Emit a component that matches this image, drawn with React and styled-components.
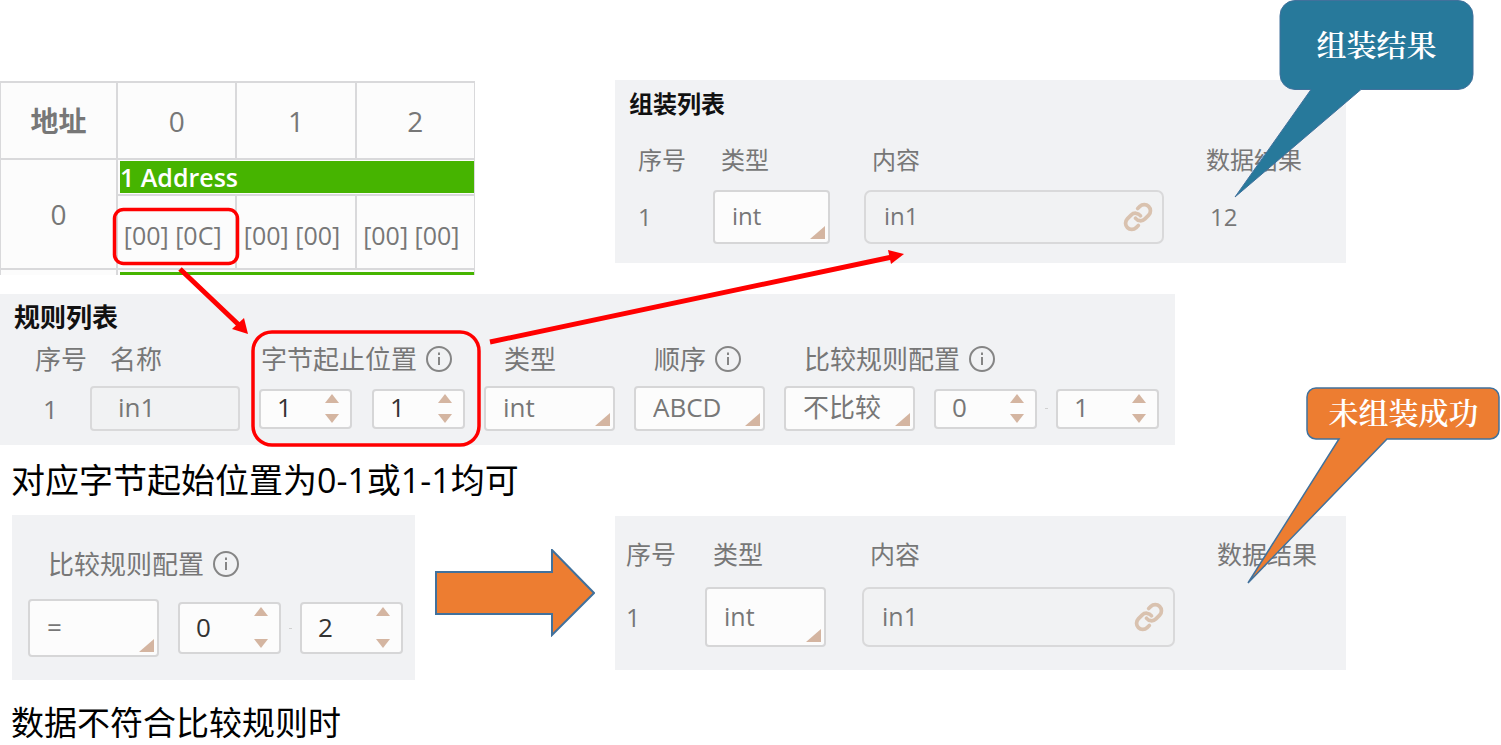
import React from 'react';
import styled, { createGlobalStyle } from 'styled-components';
import { Link } from 'lucide-react';

const App = () => {
  return (
    <>
      <GlobalStyle />
      <StPage>
        <StTopRow>
          <AddressTable />
          <StPanel $top={8} $bottom={19}>
            <StTitle>组装列表</StTitle>
            <AssemblyTable
              id="done"
              columns="98fr 151fr 342fr 140fr"
              indent={23}
              end={34}
              size={24}
              height={54}
              gap={14}
              top={24}
              result="12"
            />
          </StPanel>
        </StTopRow>

        <RulePanel />

        <StCaption $size={34}>对应字节起始位置为0-1或1-1均可</StCaption>

        <StBottomRow>
          <ComparePanel />
          <StBlockArrow viewBox="0 0 160 88" aria-hidden="true">
            <path d="M1 23H117V1L159 44L117 86V65H1Z" />
          </StBlockArrow>
          <StFailedPanel $top={22} $bottom={23}>
            <AssemblyTable
              id="failed"
              columns="90fr 157fr 355fr 129fr"
              indent={11}
              end={36}
              size={25}
              height={60}
              gap={17}
              top={0}
              result=""
            />
          </StFailedPanel>
        </StBottomRow>

        <StCaption $size={33}>数据不符合比较规则时</StCaption>

        <Annotations />
      </StPage>
    </>
  );
};

const AddressTable = () => {
  const values = ['[00] [0C]', '[00] [00]', '[00] [00]'];

  return (
    <StAddressTable>
      <colgroup>
        <StFirstCol />
        <col />
        <col />
        <col />
      </colgroup>
      <thead>
        <tr>
          <StHeadCell $bold>地址</StHeadCell>
          <StHeadCell>0</StHeadCell>
          <StHeadCell>1</StHeadCell>
          <StHeadCell>2</StHeadCell>
        </tr>
      </thead>
      <tbody>
        <tr>
          <StAddressCell rowSpan={2}>0</StAddressCell>
          <StBarCell colSpan={3}>
            <StBar>1 Address</StBar>
          </StBarCell>
        </tr>
        <tr>
          {values.map((value, index) => (
            <StValueCell key={index}>{value}</StValueCell>
          ))}
        </tr>
        <tr>
          <StAddressCell />
          <StNextCell colSpan={3}>
            <StNextBar />
          </StNextCell>
        </tr>
      </tbody>
    </StAddressTable>
  );
};

const AssemblyTable = ({
  id,
  columns,
  indent,
  end,
  size,
  height,
  gap,
  top,
  result,
}) => (
  <StFormTable $columns={columns} $size={size} $top={top}>
    <thead>
      <tr>
        <StLabelCell $indent={indent}>序号</StLabelCell>
        <StLabelCell $indent={8}>
          <label htmlFor={`${id}-type`}>类型</label>
        </StLabelCell>
        <StLabelCell $indent={8}>
          <label htmlFor={`${id}-content`}>内容</label>
        </StLabelCell>
        <StLabelCell>数据结果</StLabelCell>
      </tr>
    </thead>
    <tbody>
      <StControlRow $gap={gap} $height={height}>
        <StControlCell $indent={indent}>1</StControlCell>
        <StControlCell $end={end}>
          <Select id={`${id}-type`} options={['int']} />
        </StControlCell>
        <StControlCell $end={42}>
          <StContentField>
            <StInput id={`${id}-content`} defaultValue="in1" $radius={7} />
            <StLinkButton type="button" aria-label="link">
              <Link size={30} strokeWidth={3} />
            </StLinkButton>
          </StContentField>
        </StControlCell>
        <StControlCell $indent={4}>{result}</StControlCell>
      </StControlRow>
    </tbody>
  </StFormTable>
);

const RulePanel = () => (
  <StRulePanel>
    <StPanel $top={7} $bottom={14}>
      <StTitle $wide>规则列表</StTitle>
      <StFormTable
        $columns="90fr 169fr 225fr 150fr 150fr 391fr"
        $size={26}
        $top={10}
      >
        <thead>
          <tr>
            <StLabelCell $indent={35}>序号</StLabelCell>
            <StLabelCell $indent={20}>
              <label htmlFor="rule-name">名称</label>
            </StLabelCell>
            <StLabelCell $indent={2}>
              <label htmlFor="rule-start">字节起止位置</label>
              <InfoIcon />
            </StLabelCell>
            <StLabelCell $indent={20}>
              <label htmlFor="rule-type">类型</label>
            </StLabelCell>
            <StLabelCell $indent={20}>
              <label htmlFor="rule-order">顺序</label>
              <InfoIcon />
            </StLabelCell>
            <StLabelCell $indent={20}>
              <label htmlFor="rule-compare">比较规则配置</label>
              <InfoIcon />
            </StLabelCell>
          </tr>
        </thead>
        <tbody>
          <StControlRow $gap={11} $height={45}>
            <StControlCell $indent={43}>1</StControlCell>
            <StControlCell $end={19}>
              <StInput id="rule-name" defaultValue="in1" $radius={4} $pad={26} />
            </StControlCell>
            <StControlCell $end={19} $split={20}>
              <Spinner id="rule-start" value={1} height={40} dark />
              <Spinner label="结束位置" value={1} height={40} dark />
            </StControlCell>
            <StControlCell $end={19}>
              <Select id="rule-type" options={['int']} />
            </StControlCell>
            <StControlCell $end={19}>
              <Select id="rule-order" options={['ABCD']} />
            </StControlCell>
            <StControlCell $end={16}>
              <CompareFields id="rule-compare" option="不比较" height={40} to={1} />
            </StControlCell>
          </StControlRow>
        </tbody>
      </StFormTable>
    </StPanel>
  </StRulePanel>
);

const ComparePanel = () => (
  <StComparePanel $top={33} $bottom={23}>
    <StCompareLabel>
      <label htmlFor="compare">比较规则配置</label>
      <InfoIcon />
    </StCompareLabel>
    <StCompareBody>
      <CompareFields id="compare" option="=" height={52} to={2} dark />
    </StCompareBody>
  </StComparePanel>
);

const CompareFields = ({ id, option, height, to, dark }) => (
  <StCompareFields>
    <Select id={id} options={[option]} />
    <Spinner label="最小值" value={0} height={height} dark={dark} />
    <StDash />
    <Spinner label="最大值" value={to} height={height} dark={dark} />
  </StCompareFields>
);

const Select = ({ id, options }) => (
  <StSelectBox>
    <StSelect id={id}>
      {options.map(option => (
        <option key={option}>{option}</option>
      ))}
    </StSelect>
  </StSelectBox>
);

const Spinner = ({ id, label, value, height, dark }) => {
  const [count, setCount] = React.useState(value);

  return (
    <StSpinner $height={height}>
      <StSpinnerInput
        id={id}
        aria-label={label}
        inputMode="numeric"
        value={count}
        onChange={e => setCount(Number(e.target.value) || 0)}
        $dark={dark}
      />
      <StSteps>
        <StStep type="button" aria-label="+" onClick={() => setCount(count + 1)}>
          <svg viewBox="0 0 14 9">
            <path d="M7 0L14 9H0Z" />
          </svg>
        </StStep>
        <StStep type="button" aria-label="-" onClick={() => setCount(count - 1)}>
          <svg viewBox="0 0 14 9">
            <path d="M0 0H14L7 9Z" />
          </svg>
        </StStep>
      </StSteps>
    </StSpinner>
  );
};

const InfoIcon = () => (
  <StInfoIcon viewBox="0 0 26 26" aria-hidden="true">
    <circle cx="13" cy="13" r="12" />
    <path d="M13 11V19M13 6.5V9" />
  </StInfoIcon>
);

const Annotations = () => (
  <>
    <StOverlay viewBox="0 0 1501 745" preserveAspectRatio="none" aria-hidden="true">
      <g fill="none" stroke="#ff0000">
        <rect x="114.5" y="209.5" width="123" height="54" rx="9" strokeWidth="3.5" />
        <rect x="253" y="332" width="226" height="113" rx="19" strokeWidth="3.5" />
        <path d="M180 269L240 326M490 342L892 257" strokeWidth="5" />
      </g>
      <path d="M248 334L232 329L244 318Z" fill="#ff0000" />
      <path d="M904 254L888 250L891 264Z" fill="#ff0000" />
      <path
        d="M1295 .5H1458A15 15 0 0 1 1473 15.5V74.500A15 15 0 0 1 1458 89.500H1361L1235 197L1311 89.500H1295A15 15 0 0 1 1280 74.500V15.500A15 15 0 0 1 1295 .5Z"
        fill="#27799b"
        stroke="#41719c"
      />
      <path
        d="M1316 388H1490A9 9 0 0 1 1499 397V430A9 9 0 0 1 1490 439H1387L1248 583L1339 439H1316A9 9 0 0 1 1307 430V397A9 9 0 0 1 1316 388Z"
        fill="#ed7d31"
        stroke="#41719c"
        strokeWidth="1.5"
      />
    </StOverlay>
    <StCallout $left={1280} $top={0} $height={86}>
      组装结果
    </StCallout>
    <StCallout $left={1307} $top={386} $height={50}>
      未组装成功
    </StCallout>
  </>
);

const GlobalStyle = createGlobalStyle`
  * {
    box-sizing: border-box;
  }

  body {
    margin: 0;
    background: #ffffff;
    color: #777777;
    font-family: 'Open Sans', 'Noto Sans CJK SC', sans-serif;
  }

  button, input, select {
    margin: 0;
    font: inherit;
    color: inherit;
  }
`;

const StPage = styled.main`
  position: relative;
  overflow: hidden;
`;

const StTopRow = styled.div`
  display: grid;
  grid-template-columns: 475fr 140fr 731fr 155fr;
  align-items: start;
  padding-top: 80px;

  & > :last-child {
    grid-column: 3;
  }
`;

const StBottomRow = styled.div`
  display: grid;
  grid-template-columns: 12fr 403fr 200fr 731fr 155fr;
  align-items: start;
`;

const StPanel = styled.section`
  padding-top: ${({ $top }) => $top}px;
  padding-bottom: ${({ $bottom }) => $bottom}px;
  background: #f1f2f4;
`;

const StFailedPanel = styled(StPanel)`
  margin-top: 1px;
`;

const StComparePanel = styled(StPanel)`
  grid-column: 2;
`;

const StRulePanel = styled.div`
  display: grid;
  grid-template-columns: 1175fr 326fr;
  margin-top: 19px;
`;

const StTitle = styled.h2`
  margin: 0;
  padding-left: 14px;
  color: #111111;
  font-size: ${({ $wide }) => ($wide ? 26 : 24)}px;
  font-weight: 700;
  line-height: 32px;
`;

const StCaption = styled.p`
  margin: 0;
  padding: 13px 11px;
  color: #000000;
  font-size: ${({ $size }) => $size}px;
  line-height: 44px;

  ${StBottomRow} + & {
    padding: 21px 11px 0;
  }
`;

const StAddressTable = styled.table`
  width: 100%;
  margin-top: 1px;
  table-layout: fixed;
  border-collapse: separate;
  border-spacing: 0;
  border-right: 1px solid #d9d9db;
  background: #fcfcfc;
  font-size: 26px;
  line-height: 32px;
  text-align: center;

  th,
  td {
    padding: 0;
    border-top: 2px solid #d9d9db;
    border-left: 2px solid #d9d9db;
  }
`;

const StFirstCol = styled.col`
  width: 116px;
`;

const StHeadCell = styled.th`
  height: 77px;
  font-size: 28px;
  font-weight: ${({ $bold }) => ($bold ? 700 : 400)};

  &:first-child {
    border-left-width: 1px;
  }
`;

const StAddressCell = styled.td`
  font-size: 28px;

  && {
    border-left-width: 1px;
  }
`;

const StBarCell = styled.td`
  && {
    padding: 1px 0 1px 2px;
  }
`;

const StBar = styled.div`
  height: 32px;
  background: #46b400;
  color: #ffffff;
  font-size: 25px;
  font-weight: 600;
  text-align: left;
`;

const StValueCell = styled.td`
  height: 74px;
  font-size: 25px;

  && {
    padding: 6px 8px 0 0;
  }
`;

const StNextCell = styled.td`
  && {
    padding: 2px 0 0 2px;
  }
`;

const StNextBar = styled.div`
  height: 3px;
  background: #46b400;
`;

const StFormTable = styled.table`
  display: block;
  margin-top: ${({ $top }) => $top}px;
  font-size: ${({ $size }) => $size}px;
  line-height: 32px;

  thead,
  tbody {
    display: block;
  }

  tr {
    display: grid;
    grid-template-columns: ${({ $columns }) => $columns};
  }
`;

const StLabelCell = styled.th`
  display: flex;
  align-items: center;
  gap: 9px;
  min-width: 0;
  padding: 0 0 0 ${({ $indent = 0 }) => $indent}px;
  font-weight: 400;
  white-space: nowrap;
`;

const StControlRow = styled.tr`
  height: ${({ $height }) => $height}px;
  margin-top: ${({ $gap }) => $gap}px;
`;

const StControlCell = styled.td`
  display: flex;
  align-items: center;
  gap: ${({ $split = 0 }) => $split}px;
  min-width: 0;
  height: 100%;
  padding: 0 ${({ $end = 0 }) => $end}px 0 ${({ $indent = 0 }) => $indent}px;
`;

const StCompareLabel = styled.div`
  display: flex;
  align-items: center;
  gap: 9px;
  padding-left: 36px;
  font-size: 26px;
  line-height: 32px;
`;

const StCompareBody = styled.div`
  height: 58px;
  margin-top: 19px;
  padding: 0 12px 0 16px;
  font-size: 26px;
`;

const StCompareFields = styled.div`
  flex: 1;
  display: grid;
  grid-template-columns: 131fr 19fr 103fr 19fr 103fr;
  align-items: center;
  min-width: 0;
  height: 100%;

  & > :nth-child(2) {
    grid-column: 3;
  }
`;

const StDash = styled.span`
  justify-self: center;
  width: 3px;
  height: 1px;
  background: #d0d0d0;
`;

const StSelectBox = styled.div`
  position: relative;
  flex: 1;
  min-width: 0;
  height: 100%;

  &::after {
    content: '';
    position: absolute;
    right: 5px;
    bottom: 5px;
    width: 15px;
    height: 13px;
    background: #d4b5a1;
    clip-path: polygon(100% 0, 100% 100%, 0 100%);
    pointer-events: none;
  }
`;

const StSelect = styled.select`
  width: 100%;
  height: 100%;
  padding: 0 17px 3px;
  border: 2px solid #d6d6d7;
  border-radius: 4px;
  background: #fcfcfc;
  appearance: none;
`;

const StInput = styled.input`
  flex: 1;
  width: 100%;
  min-width: 0;
  height: 100%;
  padding: 0 ${({ $pad = 18 }) => $pad}px 3px;
  border: 2px solid #d9d9da;
  border-radius: ${({ $radius }) => $radius}px;
  background: #f1f2f3;
`;

const StContentField = styled.div`
  position: relative;
  flex: 1;
  display: flex;
  height: 100%;
`;

const StLinkButton = styled.button`
  position: absolute;
  top: 0;
  right: 11px;
  display: flex;
  align-items: center;
  height: 100%;
  padding: 0;
  border: 0;
  background: none;
  color: #d9c2af;
`;

const StSpinner = styled.div`
  flex: 1;
  display: flex;
  min-width: 0;
  height: ${({ $height }) => $height}px;
  border: 2px solid #d6d6d7;
  border-radius: 4px;
  background: #fcfcfc;
`;

const StSpinnerInput = styled.input`
  flex: 1;
  width: 0;
  min-width: 0;
  padding: 0 0 3px 16px;
  border: 0;
  background: none;
  color: ${({ $dark }) => ($dark ? '#333333' : 'inherit')};
`;

const StSteps = styled.div`
  display: flex;
  flex-direction: column;
  justify-content: space-between;
  padding: 3px 11px 4px 0;
`;

const StStep = styled.button`
  display: flex;
  padding: 0;
  border: 0;
  background: none;

  svg {
    width: 14px;
    height: 9px;
    fill: #d4b5a1;
  }
`;

const StInfoIcon = styled.svg`
  flex: none;
  width: 26px;
  height: 26px;
  fill: none;
  stroke: #858585;
  stroke-width: 2;
`;

const StBlockArrow = styled.svg`
  justify-self: center;
  width: 80%;
  margin-top: 34px;
  fill: #ed7d31;
  stroke: #41719c;
  stroke-width: 2;
`;

const StOverlay = styled.svg`
  position: absolute;
  top: 0;
  left: 0;
  width: 100%;
  height: 745px;
  pointer-events: none;
`;

const StCallout = styled.div`
  position: absolute;
  top: ${({ $top }) => $top}px;
  left: calc(${({ $left }) => $left} / 1501 * 100%);
  display: flex;
  align-items: center;
  justify-content: center;
  width: calc(193 / 1501 * 100%);
  height: ${({ $height }) => $height}px;
  color: #ffffff;
  font-family: 'Noto Serif CJK SC', 'Noto Sans CJK SC', serif;
  font-size: 30px;
  font-weight: 600;
  white-space: nowrap;
`;

export default App;
